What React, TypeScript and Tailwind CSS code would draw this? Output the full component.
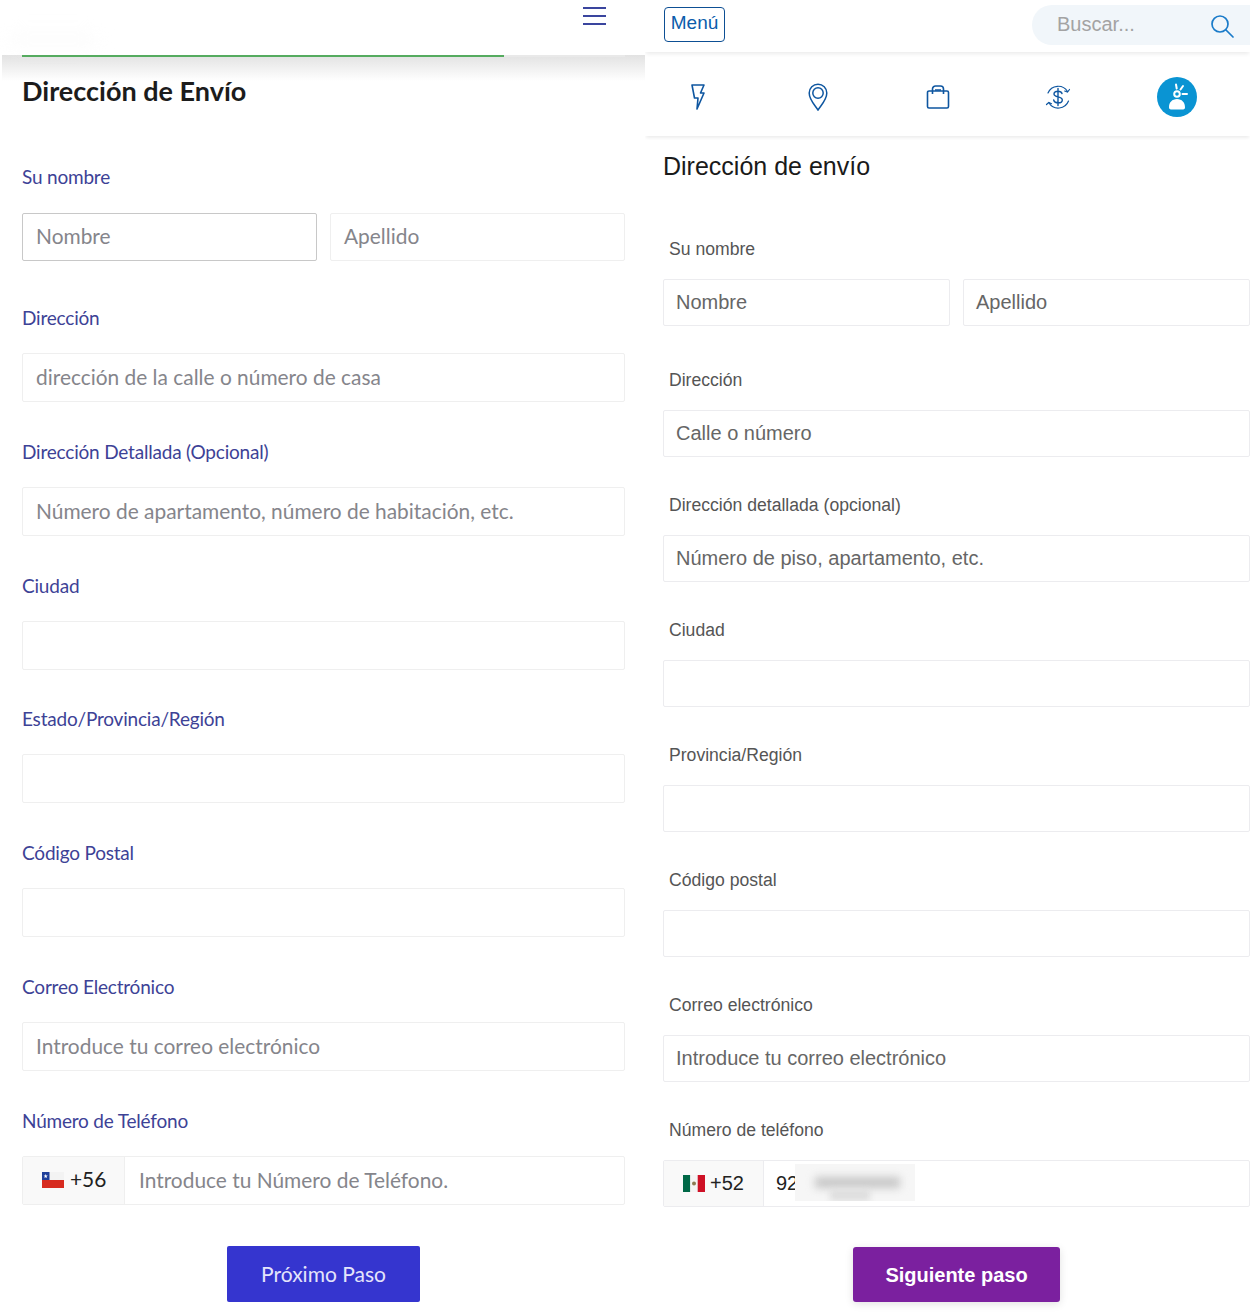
const LEFT_FIELDS = [
  { label: "Dirección", placeholder: "dirección de la calle o número de casa" },
  { label: "Dirección Detallada (Opcional)", placeholder: "Número de apartamento, número de habitación, etc." },
  { label: "Ciudad", placeholder: "" },
  { label: "Estado/Provincia/Región", placeholder: "" },
  { label: "Código Postal", placeholder: "" },
  { label: "Correo Electrónico", placeholder: "Introduce tu correo electrónico" },
];

const RIGHT_FIELDS = [
  { label: "Dirección", placeholder: "Calle o número" },
  { label: "Dirección detallada (opcional)", placeholder: "Número de piso, apartamento, etc." },
  { label: "Ciudad", placeholder: "" },
  { label: "Provincia/Región", placeholder: "" },
  { label: "Código postal", placeholder: "" },
  { label: "Correo electrónico", placeholder: "Introduce tu correo electrónico" },
];

function LeftLabel({ children }: { children: string }) {
  return <div className="h-6 mb-[23px] text-[19px] leading-6 tracking-[-0.2px] text-[#3d4296]">{children}</div>;
}

function RightLabel({ children }: { children: string }) {
  return <div className="h-6 mb-[18px] pl-1.5 text-[17.6px] leading-6 text-[#555555]">{children}</div>;
}

function LeftInput({ placeholder, className = "h-[49px] border-[#efefef]" }: { placeholder: string; className?: string }) {
  return (
    <div className={`flex-1 flex items-center pl-[13px] pb-[2px] border rounded-[2px] bg-white text-[20.9px] text-[#85858b] ${className}`}>
      {placeholder}
    </div>
  );
}

function RightInput({ placeholder }: { placeholder: string }) {
  return (
    <div className="h-[47px] flex-1 flex items-center pl-3 pb-[2px] border border-[#ececef] rounded-[2px] bg-white text-[20px] text-[#666666]">
      {placeholder}
    </div>
  );
}

function ChileFlag() {
  return (
    <svg width="22" height="16" viewBox="0 0 22 16">
      <rect width="22" height="8" fill="#f3f3f3" />
      <rect y="8" width="22" height="8" fill="#d72b1f" />
      <rect width="7.5" height="8" fill="#20409a" />
      <path d="M3.7 2l.6 1.5 1.5.1-1.2 1 .4 1.5-1.3-.8-1.3.8.4-1.5-1.2-1 1.5-.1z" fill="#fff" />
    </svg>
  );
}

function MexicoFlag() {
  return (
    <svg width="22" height="17" viewBox="0 0 22 17">
      <rect width="7.3" height="17" fill="#006847" />
      <rect x="7.3" width="7.4" height="17" fill="#f4f4f4" />
      <rect x="14.7" width="7.3" height="17" fill="#ce1126" />
      <circle cx="11" cy="8.500" r="2" fill="#8c7a52" />
    </svg>
  );
}

function LeftPanel() {
  return (
    <div className="w-[645px] shrink-0 pl-[22px] pr-5 font-['Lato',sans-serif]">
      <div className="relative z-10 h-[55px] -ml-5 -mr-5 bg-white flex justify-end pr-[39px] pt-[7px]">
        <div className="w-[23px] flex flex-col gap-[6px]">
          <div className="h-[2px] bg-[#3a459e]" />
          <div className="h-[2px] bg-[#3a459e]" />
          <div className="h-[2px] bg-[#3a459e]" />
        </div>
        <div className="absolute left-[6px] top-[32px] w-[90px] h-[14px] rounded-full bg-[#fcfcfc] blur-sm" />
      </div>
      <div className="absolute top-[55px] left-[2px] w-[643px] h-[26px] bg-gradient-to-b from-[#e2e2e2] to-white" />
      <div className="relative z-10 h-[2px] bg-[#e9e9e9]">
        <div className="h-full w-[482px] bg-[#55ab5f]" />
      </div>
      <h1 className="relative z-10 mt-[18px] mb-px h-8 text-[27px] leading-8 font-bold text-[#1c1c1c]">Dirección de Envío</h1>
      <div className="mt-[58px]">
        <div className="h-6 mb-6 text-[19px] leading-6 tracking-[-0.2px] text-[#3d4296]">Su nombre</div>
        <div className="flex gap-[13px]">
          <LeftInput placeholder="Nombre" className="h-[48px] border-[#c8c8c8]" />
          <LeftInput placeholder="Apellido" className="h-[48px] border-[#efefef]" />
        </div>
      </div>
      <div className="mt-[45px] flex flex-col gap-[37.8px]">
        {LEFT_FIELDS.map((f) => (
          <div key={f.label}>
            <LeftLabel>{f.label}</LeftLabel>
            <div className="flex">
              <LeftInput placeholder={f.placeholder} />
            </div>
          </div>
        ))}
        <div>
          <LeftLabel>Número de Teléfono</LeftLabel>
          <div className="h-[49px] flex border border-[#efefef] rounded-[2px] text-[20.9px]">
            <div className="w-[102px] flex items-center gap-[6px] pl-[19px] bg-[#f9f9f9] border-r border-[#efefef] text-[#222222]">
              <ChileFlag />
              <span className="pb-1">+56</span>
            </div>
            <div className="flex items-center pl-[14px] pb-[2px] text-[#85858b]">Introduce tu Número de Teléfono.</div>
          </div>
        </div>
      </div>
      <div className="mt-[41px] flex justify-center">
        <button className="w-[193px] h-[56px] rounded-[2px] bg-[#3535cf] text-[21px] text-[#e4e4fb]">Próximo Paso</button>
      </div>
    </div>
  );
}

function RightPanel() {
  return (
    <div className="w-[605px] shrink-0 overflow-hidden font-['Liberation_Sans',Arial,sans-serif]">
      <div className="relative z-10 h-[52px] bg-white shadow-[0_3px_4px_-1px_rgba(0,0,0,0.08)] flex items-start justify-between pl-[19px] pt-[5px]">
        <div className="mt-[2px] h-[35px] w-[61px] flex items-center justify-center pb-[2px] rounded-[4px] border border-[#0d4f94] text-[19px] text-[#0b5cab]">
          Menú
        </div>
        <div className="w-[218px] h-10 rounded-l-[20px] bg-[#f1f6fa] flex items-center justify-between pl-[25px] pr-[16px] pb-[2px] text-[20px] text-[#a3a3a3]">
          Buscar...
          <svg className="mt-[3px]" width="24" height="24" viewBox="0 0 24 24" fill="none" stroke="#1a7bc9" strokeWidth="1.7" strokeLinecap="round">
            <circle cx="10" cy="10" r="8" />
            <path d="M16 16l7 7" />
          </svg>
        </div>
      </div>
      <div className="h-[84px] pl-[33px] pt-[6px] flex items-center gap-[80px] shadow-[0_3px_3px_-1px_rgba(0,0,0,0.07)]">
        <div className="w-10 flex justify-center">
          <svg width="16" height="26" viewBox="0 0 16 26" fill="none" stroke="#0e56a0" strokeWidth="1.6" strokeLinejoin="round">
            <path d="M2 1h12l-3.500 8h3.500L7 25l1-11H4.500z" />
          </svg>
        </div>
        <div className="w-10 flex justify-center">
          <svg width="20" height="28" viewBox="0 0 20 28" fill="none" stroke="#0e56a0" strokeWidth="1.5">
            <path d="M10 27C6 21 1.200 16.500 1.200 10a8.800 8.800 0 0 1 17.600 0C18.800 16.500 14 21 10 27z" />
            <circle cx="10" cy="10" r="5.200" />
          </svg>
        </div>
        <div className="w-10 flex justify-center">
          <svg width="24" height="24" viewBox="0 0 24 24" fill="none" stroke="#0e56a0" strokeWidth="1.6" strokeLinejoin="round">
            <path d="M3 6h18a1.500 1.500 0 0 1 1.500 1.500v14a1.500 1.500 0 0 1-1.500 1.500H3a1.500 1.500 0 0 1-1.500-1.500v-14A1.500 1.500 0 0 1 3 6z" />
            <path d="M6.500 9V4a3 3 0 0 1 3-3h5a3 3 0 0 1 3 3v5M9 5h6" />
          </svg>
        </div>
        <div className="w-10 flex justify-center">
          <svg width="28" height="28" viewBox="0 0 28 28" fill="none" stroke="#0e56a0" strokeWidth="1.200" strokeLinecap="round">
            <path d="M4 10A11 11 0 0 1 23.500 8.500M24.500 18A11 11 0 0 1 5 20" />
            <path d="M25.500 6.500l-2 2.500-2.800-1M2.500 21.500l2.300-2 2.700 1.200" />
            <path d="M18 10.500c-.5-1.500-2-2.300-4-2.300-2.300 0-4 1.100-4 2.800 0 3.800 8.300 2 8.300 5.900 0 1.800-1.900 2.900-4.200 2.900-2.200 0-4-1-4.400-2.800M14 5.500v17" strokeWidth="1.400" />
          </svg>
        </div>
        <div className="w-10 flex justify-center -ml-px">
          <div className="w-10 h-10 rounded-full bg-[#0a94d3] flex items-center justify-center">
            <svg width="26" height="30" viewBox="0 0 26 30" fill="none" stroke="#fff">
              <circle cx="13" cy="12" r="2.800" strokeWidth="2" />
              <path d="M12 2.500l.7 4M19 4l-2.500 3.500M18.500 12H23" strokeWidth="2" strokeLinecap="round" />
              <path d="M5 25.500c-.2-5 3.200-8.500 8-8.500s8.200 3.500 8 8.500c0 1.500-1 2-3 2H8c-2 0-3-.5-3-2z" fill="#fff" stroke="none" />
            </svg>
          </div>
        </div>
      </div>
      <div className="pl-[18px]">
        <h2 className="mt-[14px] h-[32px] text-[25px] leading-8 text-[#1a1a1a]">Dirección de envío</h2>
        <div className="mt-[55px]">
          <RightLabel>Su nombre</RightLabel>
          <div className="flex gap-[13px]">
            <RightInput placeholder="Nombre" />
            <RightInput placeholder="Apellido" />
          </div>
        </div>
        <div className="mt-[42px] flex flex-col gap-9">
          {RIGHT_FIELDS.map((f) => (
            <div key={f.label}>
              <RightLabel>{f.label}</RightLabel>
              <div className="flex">
                <RightInput placeholder={f.placeholder} />
              </div>
            </div>
          ))}
          <div>
            <RightLabel>Número de teléfono</RightLabel>
            <div className="h-[47px] flex border border-[#ececef] rounded-[2px] text-[20px]">
              <div className="w-[100px] flex items-center gap-[5px] pl-[19px] bg-[#f9f9f9] border-r border-[#ececef] text-[#222222]">
                <MexicoFlag />
                <span className="pb-[2px]">+52</span>
              </div>
              <div className="relative flex-1 flex items-center pl-3 pb-[2px] text-[#222222]">
                92
                <div className="absolute left-[31px] top-[3px] w-[120px] h-[37px] bg-[#f6f6f6] overflow-hidden">
                  <div className="absolute left-[20px] top-[13px] w-[85px] h-[11px] bg-[#c6c6c6] blur-[4px]" />
                  <div className="absolute left-[35px] top-[25px] w-[40px] h-[12px] bg-[#dedede] blur-[3px]" />
                </div>
              </div>
            </div>
          </div>
        </div>
        <div className="mt-10 flex justify-center">
          <button className="w-[207px] h-[55px] rounded-[3px] bg-[#7b209f] text-[20px] font-bold text-white shadow-[0_2px_8px_rgba(0,0,0,0.12)]">
            Siguiente paso
          </button>
        </div>
      </div>
    </div>
  );
}

export default function App() {
  return (
    <div className="relative w-[1250px] h-[1315px] overflow-hidden bg-white flex">
      <LeftPanel />
      <RightPanel />
    </div>
  );
}
